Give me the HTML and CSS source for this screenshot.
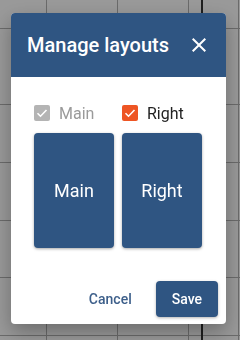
FILE: index.html
```html
<!DOCTYPE html>
<html lang="en">
<head>
    <meta charset="UTF-8">
    <meta name="viewport" content="width=device-width, initial-scale=1.0">
    <title>Manage layouts</title>
    <link rel="stylesheet" href="styles.css">
</head>
<body>
    <div class="page"></div>

    <div class="overlay">
        <div class="dialog">
            <div class="dialog-header">
                <h2>Manage layouts</h2>
                <button class="close-btn" aria-label="Close">
                    <svg width="24" height="24" viewBox="0 0 24 24">
                        <path d="M19 6.41L17.59 5 12 10.59 6.41 5 5 6.41 10.59 12 5 17.59 6.41 19 12 13.41 17.59 19 19 17.59 13.41 12z" fill="#fff"/>
                    </svg>
                </button>
            </div>

            <div class="dialog-content">
                <div class="layout-grid">
                    <label class="check disabled">
                        <span class="box">
                            <svg width="16" height="16" viewBox="0 0 16 16"><path d="M3.5 8.2l3 3 6-6.2" fill="none" stroke="#fff" stroke-width="1.6"/></svg>
                        </span>
                        Main
                    </label>
                    <label class="check checked">
                        <span class="box">
                            <svg width="16" height="16" viewBox="0 0 16 16"><path d="M3.5 8.2l3 3 6-6.2" fill="none" stroke="#fff" stroke-width="1.6"/></svg>
                        </span>
                        Right
                    </label>
                    <div class="layout-card">Main</div>
                    <div class="layout-card">Right</div>
                </div>
            </div>

            <div class="dialog-actions">
                <button class="btn-text">Cancel</button>
                <button class="btn-primary">Save</button>
            </div>
        </div>
    </div>
</body>
</html>
```

FILE: styles.css
```css
body {
    margin: 0;
    font-family: Roboto, "Noto Sans", Arial, sans-serif;
    background-color: #fff;
}
.page {
    height: 340px;
    background-color: #fff;
    background-image:
        linear-gradient(to right, transparent 46px, #b2b2b2 46px, #b2b2b2 47px, transparent 47px,
            transparent 117px, #b2b2b2 117px, #b2b2b2 118px, transparent 118px,
            transparent 188px, #b2b2b2 188px, #b2b2b2 189px, transparent 189px,
            transparent 201px, #333 201px, #333 203px, transparent 203px,
            transparent 238px, #b2b2b2 238px, #b2b2b2 239px, transparent 239px),
        linear-gradient(to bottom, transparent 28px, #b2b2b2 28px, #b2b2b2 29px, transparent 29px,
            transparent 104px, #b2b2b2 104px, #b2b2b2 105px, transparent 105px,
            transparent 162px, #b2b2b2 162px, #b2b2b2 163px, transparent 163px,
            transparent 220px, #b2b2b2 220px, #b2b2b2 221px, transparent 221px,
            transparent 277px, #b2b2b2 277px, #b2b2b2 278px, transparent 278px,
            transparent 335px, #b2b2b2 335px, #b2b2b2 336px, transparent 336px);
}
.overlay {
    position: fixed;
    top: 0;
    left: 0;
    right: 0;
    bottom: 0;
    background: rgba(0, 0, 0, 0.4);
    padding: 13px 0 0 11px;
}
.dialog {
    width: 215px;
    background: #fff;
    border-radius: 4px;
    overflow: hidden;
    box-shadow: 0 8px 20px rgba(0, 0, 0, 0.3);
}
.dialog-header {
    height: 64px;
    background-color: #2f5582;
    display: flex;
    align-items: center;
    justify-content: space-between;
    padding: 0 15px 0 16px;
}
.dialog-header h2 {
    margin: 0;
    color: #fff;
    font-size: 20px;
    font-weight: 500;
}
.close-btn {
    background: none;
    border: none;
    padding: 0;
    width: 24px;
    height: 24px;
    cursor: pointer;
}
.close-btn svg {
    display: block;
}
.dialog-content {
    padding: 24px 0 0 23px;
}
.layout-grid {
    display: grid;
    grid-template-columns: 80px 80px;
    grid-template-rows: 24px 115px;
    gap: 8px;
}
.check {
    display: flex;
    align-items: center;
    gap: 9px;
    font-size: 16px;
    color: #222;
}
.check .box {
    width: 16px;
    height: 16px;
    border-radius: 2px;
    display: block;
}
.check .box svg {
    display: block;
}
.check.disabled {
    color: #9a9a9a;
}
.check.disabled .box {
    background-color: #b4b4b4;
}
.check.checked .box {
    background-color: #ee5524;
}
.layout-card {
    background-color: #2f5582;
    border-radius: 4px;
    box-shadow: 0 1px 3px rgba(0, 0, 0, 0.35);
    color: #fff;
    font-size: 18px;
    display: flex;
    align-items: center;
    justify-content: center;
}
.dialog-actions {
    display: flex;
    justify-content: flex-end;
    align-items: center;
    gap: 12px;
    padding: 33px 8px 7px 0;
}
.dialog-actions button {
    font-family: Roboto, "Noto Sans", Arial, sans-serif;
    font-size: 14px;
    font-weight: 500;
    height: 36px;
    border: none;
    border-radius: 4px;
    cursor: pointer;
}
.btn-text {
    background: none;
    color: #3d5f8a;
    padding: 0 12px;
}
.btn-primary {
    background-color: #2f5582;
    color: #fff;
    padding: 0 16px;
    box-shadow: 0 1px 3px rgba(0, 0, 0, 0.3);
}
```
